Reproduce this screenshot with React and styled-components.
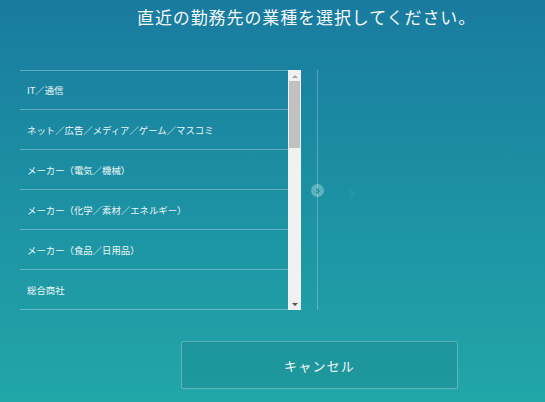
import React from 'react';
import styled, {createGlobalStyle} from 'styled-components';

const GlobalStyle = createGlobalStyle`
    html, body {
        margin: 0;
        padding: 0;
    }
    body {
        font-family: "Noto Sans CJK JP", "Noto Sans", sans-serif;
        color: #fff;
    }
`;

const Page = styled.div`
    width: 545px;
    height: 402px;
    overflow: hidden;
    background: linear-gradient(180deg, #197b9f 0%, #1c8fa3 45%, #22a6a8 100%);
    display: flex;
    flex-direction: column;
`;

const Title = styled.h1`
    margin: 0;
    padding: 5px 0 0 137px;
    height: 70px;
    box-sizing: border-box;
    font-size: 17px;
    font-weight: 400;
    letter-spacing: 0.9px;
    line-height: 24px;
    color: #f4f8fa;
    white-space: nowrap;
`;

const Body = styled.div`
    display: flex;
    flex-direction: row;
    padding-left: 20px;
    height: 240px;
`;

const ListBox = styled.div`
    display: flex;
    flex-direction: row;
    width: 281px;
    height: 240px;
`;

const List = styled.ul`
    list-style: none;
    margin: 0;
    padding: 0;
    width: 268px;
    height: 240px;
    overflow: hidden;
    border-top: 1px solid rgba(255, 255, 255, 0.3);
    box-sizing: border-box;
`;

const Item = styled.li`
    height: ${({first}) => first ? '39px' : '40px'};
    box-sizing: border-box;
    border-bottom: 1px solid rgba(255, 255, 255, 0.3);
    padding-left: 7px;
    display: flex;
    align-items: center;
    font-size: 9.4px;
    color: #eef6f8;
    white-space: nowrap;
`;

const Scrollbar = styled.div`
    width: 13px;
    height: 240px;
    background: #f1f1f1;
    display: flex;
    flex-direction: column;
    align-items: center;
`;

const Arrow = styled.div`
    width: 0;
    height: 0;
    margin: ${({down}) => down ? 'auto 0 4px' : '5px 0 3px'};
    border-left: 3px solid transparent;
    border-right: 3px solid transparent;
    ${({down}) => down ? 'border-top: 3px solid #505050;' : 'border-bottom: 3px solid #a3a3a3;'}
`;

const Thumb = styled.div`
    width: 11px;
    height: 67px;
    background: #c1c1c1;
`;

const Divider = styled.div`
    position: relative;
    margin-left: 16px;
    width: 1px;
    height: 240px;
    background: rgba(255, 255, 255, 0.25);
`;

const Knob = styled.div`
    position: absolute;
    left: -6px;
    top: 114px;
    width: 13px;
    height: 13px;
    border-radius: 50%;
    background: rgba(255, 255, 255, 0.3);
    display: flex;
    align-items: center;
    justify-content: center;
`;

const Ghost = styled.div`
    margin: 111px 0 0 28px;
    opacity: 0.035;
`;

const Footer = styled.div`
    padding: 31px 0 0 181px;
`;

const CancelButton = styled.button`
    width: 277px;
    height: 48px;
    box-sizing: border-box;
    border: 1px solid rgba(255, 255, 255, 0.28);
    border-radius: 2px;
    background: rgba(20, 110, 120, 0.22);
    color: #f4f8f8;
    font-family: "Noto Sans CJK JP", "Noto Sans", sans-serif;
    font-size: 13px;
    letter-spacing: 1.2px;
    cursor: pointer;
`;

const industries = [
    'IT／通信',
    'ネット／広告／メディア／ゲーム／マスコミ',
    'メーカー（電気／機械）',
    'メーカー（化学／素材／エネルギー）',
    'メーカー（食品／日用品）',
    '総合商社',
];

const Chevron = ({size = 6, color = '#1d8c9c', width = 1.6}) => (
    <svg width={size} height={size} viewBox="0 0 6 6">
        <path d="M2 1 L4 3 L2 5" fill="none" stroke={color} strokeWidth={width} strokeLinecap="round"
              strokeLinejoin="round"/>
    </svg>
);

export default function App() {
    return (
        <Page>
            <GlobalStyle/>
            <Title>直近の勤務先の業種を選択してください。</Title>
            <Body>
                <ListBox>
                    <List>
                        {industries.map((name, i) => <Item key={name} first={i === 0}>{name}</Item>)}
                    </List>
                    <Scrollbar>
                        <Arrow/>
                        <Thumb/>
                        <Arrow down/>
                    </Scrollbar>
                </ListBox>
                <Divider>
                    <Knob><Chevron/></Knob>
                </Divider>
                <Ghost><Chevron size={12} color="#ffffff" width={1}/></Ghost>
            </Body>
            <Footer>
                <CancelButton>キャンセル</CancelButton>
            </Footer>
        </Page>
    );
}
